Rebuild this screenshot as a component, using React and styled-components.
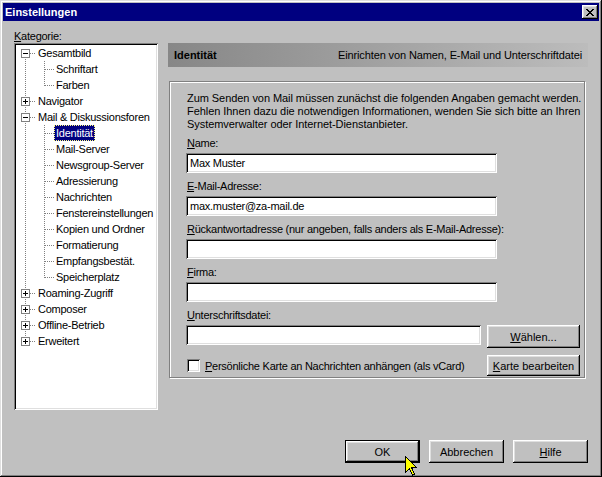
import React from "react";
import styled, { createGlobalStyle } from "styled-components";

const GlobalStyle = createGlobalStyle`
  body {
    margin: 0;
    background: #c0c0c0;
    font-family: "Liberation Sans", Arial, sans-serif;
    font-size: 11px;
    color: #000;
  }
`;

const raised = `
  box-shadow: inset -1px -1px #000, inset 1px 1px #fff,
    inset -2px -2px #808080, inset 2px 2px #dfdfdf;
`;

const sunken = `
  box-shadow: inset 1px 1px #808080, inset -1px -1px #fff,
    inset 2px 2px #000, inset -2px -2px #dfdfdf;
`;

const Window = styled.div`
  position: relative;
  width: 602px;
  height: 477px;
  box-sizing: border-box;
  padding: 3px;
  background: #c0c0c0;
  display: flex;
  flex-direction: column;
  overflow: hidden;
  box-shadow: inset -1px -1px #000, inset 1px 1px #dfdfdf,
    inset -2px -2px #808080, inset 2px 2px #fff;
`;

const TitleBar = styled.div`
  height: 18px;
  background: #000080;
  display: flex;
  align-items: center;
  justify-content: space-between;
  padding: 0 1px 0 2px;
`;

const TitleText = styled.span`
  color: #fff;
  font-weight: bold;
  font-size: 11px;
`;

const CloseButton = styled.div`
  width: 16px;
  height: 14px;
  background: #c0c0c0;
  ${raised}
  display: flex;
  align-items: center;
  justify-content: center;
  padding-right: 1px;
  box-sizing: border-box;
`;

const Body = styled.div`
  display: flex;
  gap: 10px;
  padding: 9px 10px 0 11px;
  letter-spacing: -0.25px;
`;

const LeftCol = styled.div`
  width: 144px;
  display: flex;
  flex-direction: column;
`;

const CaptionLabel = styled.div`
  line-height: 13px;
`;

const Accel = styled.span`
  text-decoration: underline;
`;

const TreeBox = styled.div`
  height: 367px;
  box-sizing: border-box;
  background: #fff;
  padding: 2px 0 0 2px;
  ${sunken}
`;

const TreeRow = styled.div`
  display: flex;
  align-items: center;
  height: 16px;
`;

const TreeLabel = styled.span`
  height: 16px;
  box-sizing: border-box;
  line-height: 14px;
  padding: 0 1px;
  white-space: nowrap;
  border: 1px ${(p) => (p.$selected ? "dotted #ffff80" : "solid transparent")};
  background: ${(p) => (p.$selected ? "#000080" : "transparent")};
  color: ${(p) => (p.$selected ? "#fff" : "#000")};
`;

const RightCol = styled.div`
  width: 420px;
  padding-top: 13px;
  display: flex;
  flex-direction: column;
`;

const Header = styled.div`
  height: 24px;
  display: flex;
  align-items: center;
  justify-content: space-between;
  padding: 0 6px;
  letter-spacing: -0.12px;
  background: linear-gradient(to right, #878787, #bcbcbc);
`;

const HeaderTitle = styled.span`
  font-weight: bold;
  letter-spacing: 0;
`;

const GroupBox = styled.div`
  margin: 14px 3px 0 1px;
  height: 297px;
  box-sizing: border-box;
  border: 1px solid #808080;
  box-shadow: inset 1px 1px #fff, 1px 1px #fff;
  padding: 10px 0 0 16px;
  display: flex;
  flex-direction: column;
`;

const Intro = styled.p`
  margin: 0 0 6px;
  padding-left: 1px;
  line-height: 13px;
  letter-spacing: -0.06px;
  white-space: nowrap;
`;

const Field = styled.div`
  display: flex;
  flex-direction: column;
  margin-bottom: 7px;
`;

const FieldLabel = styled.label`
  line-height: 13px;
  margin-bottom: 3px;
  padding-left: 1px;
`;

const TextInput = styled.input`
  width: ${(p) => p.$width || 311}px;
  height: 20px;
  box-sizing: border-box;
  border: none;
  outline: none;
  margin: 0;
  padding: 0 2px 0 4px;
  background: #fff;
  font-family: "Liberation Sans", Arial, sans-serif;
  font-size: 11px;
  letter-spacing: -0.25px;
  color: #000;
  ${sunken}
`;

const InlineRow = styled.div`
  display: flex;
  align-items: ${(p) => p.$align || "flex-start"};
  justify-content: space-between;
  width: 394px;
`;

const Button = styled.div`
  width: ${(p) => p.$width || 75}px;
  height: ${(p) => p.$height || 23}px;
  box-sizing: border-box;
  background: #c0c0c0;
  display: flex;
  align-items: center;
  justify-content: center;
  letter-spacing: 0;
  ${raised}
  ${(p) => p.$default && `border: 1px solid #000;`}
`;

const CheckWrap = styled.label`
  display: flex;
  align-items: center;
  gap: 5px;
  padding-left: 1px;
`;

const CheckBox = styled.span`
  width: 13px;
  height: 13px;
  background: #fff;
  ${sunken}
`;

const ButtonRow = styled.div`
  display: flex;
  justify-content: flex-end;
  gap: 9px;
  margin-top: 30px;
  padding-right: 11px;
  letter-spacing: -0.25px;
`;

const Cursor = styled.svg`
  position: absolute;
  left: 405px;
  top: 456px;
`;

function CloseGlyph() {
  return (
    <svg width="8" height="7" viewBox="0 0 8 7" shapeRendering="crispEdges">
      <path
        fill="#000"
        d="M0 0h2v1H0zM6 0h2v1H6zM1 1h2v1H1zM5 1h2v1H5zM2 2h4v1H2zM3 3h2v1H3zM2 4h4v1H2zM1 5h2v1H1zM5 5h2v1H5zM0 6h2v1H0zM6 6h2v1H6z"
      />
    </svg>
  );
}

const dot = { stroke: "#808080", strokeWidth: 1, strokeDasharray: "1 1" };

// root line: "first" | "mid" | "last"; kids: "mid" | "last"
function Gutter({ root, child, expander }) {
  const w = child ? 38 : 20;
  const rootY = root === "first" ? [8, 16] : root === "last" ? [0, 9] : [0, 16];
  return (
    <svg width={w} height="16" shapeRendering="crispEdges" style={{ flex: "none" }}>
      <line x1="9.5" y1={rootY[0]} x2="9.5" y2={rootY[1]} {...dot} />
      {child ? (
        <>
          <line x1="28.5" y1="0" x2="28.5" y2={child === "last" ? 9 : 16} {...dot} />
          <line x1="29" y1="8.5" x2="38" y2="8.5" {...dot} />
        </>
      ) : (
        <>
          <line x1="14" y1="8.5" x2="20" y2="8.5" {...dot} />
          <rect x="5.5" y="4.5" width="8" height="8" fill="#fff" stroke="#808080" />
          <line x1="7" y1="8.5" x2="12" y2="8.5" stroke="#000" />
          {expander === "plus" && <line x1="9.5" y1="6" x2="9.5" y2="11" stroke="#000" />}
        </>
      )}
    </svg>
  );
}

const tree = [
  { label: "Gesamtbild", exp: "minus", root: "first" },
  { label: "Schriftart", child: "mid" },
  { label: "Farben", child: "last" },
  { label: "Navigator", exp: "plus" },
  { label: "Mail & Diskussionsforen", exp: "minus" },
  { label: "Identität", child: "mid", selected: true },
  { label: "Mail-Server", child: "mid" },
  { label: "Newsgroup-Server", child: "mid" },
  { label: "Adressierung", child: "mid" },
  { label: "Nachrichten", child: "mid" },
  { label: "Fenstereinstellungen", child: "mid" },
  { label: "Kopien und Ordner", child: "mid" },
  { label: "Formatierung", child: "mid" },
  { label: "Empfangsbestät.", child: "mid" },
  { label: "Speicherplatz", child: "last" },
  { label: "Roaming-Zugriff", exp: "plus" },
  { label: "Composer", exp: "plus" },
  { label: "Offline-Betrieb", exp: "plus" },
  { label: "Erweitert", exp: "plus", root: "last" },
];

export default function App() {
  return (
    <>
      <GlobalStyle />
      <Window>
        <TitleBar>
          <TitleText>Einstellungen</TitleText>
          <CloseButton>
            <CloseGlyph />
          </CloseButton>
        </TitleBar>

        <Body>
          <LeftCol>
            <CaptionLabel>
              <Accel>K</Accel>ategorie:
            </CaptionLabel>
            <TreeBox>
              {tree.map((item) => (
                <TreeRow key={item.label}>
                  <Gutter root={item.root || "mid"} child={item.child} expander={item.exp} />
                  <TreeLabel $selected={item.selected}>{item.label}</TreeLabel>
                </TreeRow>
              ))}
            </TreeBox>
          </LeftCol>

          <RightCol>
            <Header>
              <HeaderTitle>Identität</HeaderTitle>
              <span>Einrichten von Namen, E-Mail und Unterschriftdatei</span>
            </Header>
            <GroupBox>
              <Intro>
                Zum Senden von Mail müssen zunächst die folgenden Angaben gemacht werden.
                <br />
                Fehlen Ihnen dazu die notwendigen Informationen, wenden Sie sich bitte an Ihren
                <br />
                Systemverwalter oder Internet-Dienstanbieter.
              </Intro>
              <Field>
                <FieldLabel>
                  <Accel>N</Accel>ame:
                </FieldLabel>
                <TextInput defaultValue="Max Muster" />
              </Field>
              <Field>
                <FieldLabel>
                  <Accel>E</Accel>-Mail-Adresse:
                </FieldLabel>
                <TextInput defaultValue="max.muster@za-mail.de" />
              </Field>
              <Field>
                <FieldLabel>
                  <Accel>R</Accel>ückantwortadresse (nur angeben, falls anders als E-Mail-Adresse):
                </FieldLabel>
                <TextInput defaultValue="" />
              </Field>
              <Field>
                <FieldLabel>
                  <Accel>F</Accel>irma:
                </FieldLabel>
                <TextInput defaultValue="" />
              </Field>
              <Field>
                <FieldLabel>
                  <Accel>U</Accel>nterschriftsdatei:
                </FieldLabel>
                <InlineRow>
                  <TextInput $width={295} defaultValue="" />
                  <Button $width={93}>
                    <span>
                      <Accel>W</Accel>ählen...
                    </span>
                  </Button>
                </InlineRow>
              </Field>
              <InlineRow $align="center">
                <CheckWrap>
                  <CheckBox />
                  <span>
                    <Accel>P</Accel>ersönliche Karte an Nachrichten anhängen (als vCard)
                  </span>
                </CheckWrap>
                <Button $width={93} $height={21}>
                  <span>
                    <Accel>K</Accel>arte bearbeiten
                  </span>
                </Button>
              </InlineRow>
            </GroupBox>
          </RightCol>
        </Body>

        <ButtonRow>
          <Button $default>OK</Button>
          <Button>Abbrechen</Button>
          <Button>
            <span>
              <Accel>H</Accel>ilfe
            </span>
          </Button>
        </ButtonRow>

        <Cursor width="12" height="20" viewBox="0 0 12 20" shapeRendering="crispEdges">
          <path d="M0.5 0.5 V16.5 L4.5 12.5 L7.5 19 L9.5 18 L6.5 11.5 H11.5 Z" fill="#ffff00" stroke="#000" />
        </Cursor>
      </Window>
    </>
  );
}
